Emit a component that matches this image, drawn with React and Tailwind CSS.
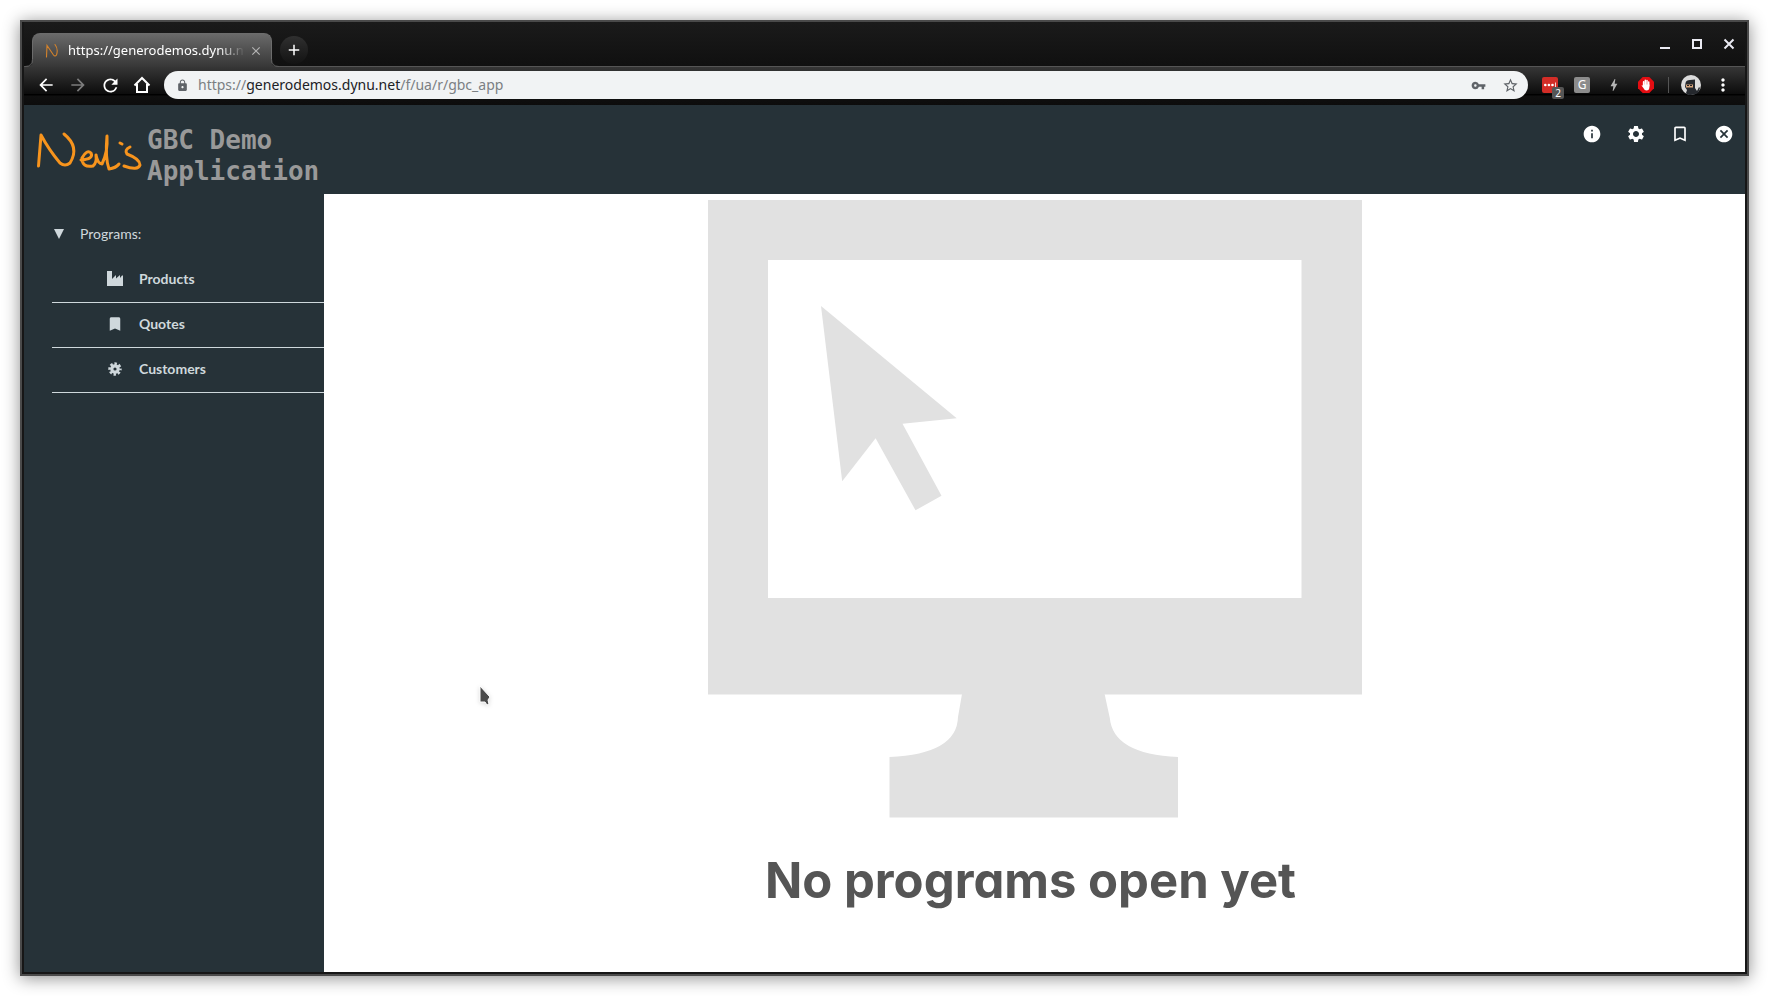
import { MdArrowBack, MdArrowForward, MdRefresh, MdLock, MdVpnKey, MdStarBorder, MdMoreVert, MdInfo, MdSettings, MdBookmarkBorder, MdCancel, MdBookmark, MdClose, MdAdd, MdBolt } from 'react-icons/md'

const focusRing = 'focus-visible:outline-1 focus-visible:outline-white'

function NavButton({ label, className = '', children }) {
  return (
    <button type="button" aria-label={label} className={`flex size-8 items-center justify-center ${focusRing} ${className}`}>
      {children}
    </button>
  )
}

function TabFlare({ className }) {
  return (
    <svg viewBox="0 0 8 8" className={`absolute bottom-0 size-2 ${className}`}>
      <path d="M8 0V8H0Q8 8 8 0" fill="#383838" />
      <path d="M0 7.500Q7.500 7.500 7.500 0" fill="none" stroke="#5c5c5c" />
    </svg>
  )
}

function TabStrip() {
  return (
    <div className="flex h-11 items-end bg-linear-to-b from-[#1b1b1b] to-[#101010] pl-2">
      <div className="relative z-10 -mb-px flex h-[34px] w-60 items-center rounded-t-lg border border-b-0 border-[#6c6c6c] bg-linear-to-b from-[#6a6a6a] to-[#373737] pr-2 pl-3">
        <TabFlare className="-left-2" />
        <TabFlare className="-right-2 -scale-x-100" />
        <svg viewBox="0 0 14 16" className="h-4 w-3.5 shrink-0" fill="none" stroke="#d5832b" strokeWidth="1.100" strokeLinecap="round">
          <path d="M1.500 14L2 2.500L8.500 12Q10 14 11.500 12Q13.500 6 10 1.500" />
        </svg>
        <span className="ml-[9px] min-w-0 flex-1 text-[13px] whitespace-nowrap text-white mask-r-from-85%">https://generodemos.dynu.n</span>
        <button type="button" aria-label="Close tab" className="ml-1 text-[#b4b4b4]"><MdClose size={14} /></button>
      </div>
      <button type="button" aria-label="New tab" className="mb-[2px] ml-2 flex size-7 items-center justify-center rounded-full bg-linear-to-b from-[#303030] to-[#131313] text-white">
        <MdAdd size={18} />
      </button>
      <div className="mb-1.5 ml-auto flex text-[#eaeaf2]">
        <NavButton label="Minimize"><svg viewBox="0 0 12 12" className="size-3"><path d="M1 9h10v2H1z" fill="currentColor" /></svg></NavButton>
        <NavButton label="Maximize"><svg viewBox="0 0 12 12" className="size-3"><path d="M2 2h8v8H2z" fill="none" stroke="currentColor" strokeWidth="2" /></svg></NavButton>
        <NavButton label="Close window"><svg viewBox="0 0 12 12" className="size-3"><path d="M1.500 1.500l9 9M10.500 1.500l-9 9" fill="none" stroke="currentColor" strokeWidth="2" /></svg></NavButton>
      </div>
    </div>
  )
}

function HomeIcon() {
  return (
    <svg viewBox="0 0 18 18" className="size-[18px]" fill="none" stroke="currentColor" strokeWidth="2">
      <path d="M1.500 9.500L9 2l7.500 7.500M4 8v8h10V8" />
    </svg>
  )
}

function Toolbar() {
  return (
    <div className="flex h-[39px] items-center border-t border-[#555] bg-[linear-gradient(#363636,#0c0c0c_27px,#000_27px,#000_28px,#101010_29px,#0c0c0c)] px-1.5 pb-[2px]">
      <NavButton label="Back" className="text-white"><MdArrowBack size={20} /></NavButton>
      <NavButton label="Forward" className="text-[#7c7c7c]"><MdArrowForward size={20} /></NavButton>
      <NavButton label="Reload" className="text-white"><MdRefresh size={21} /></NavButton>
      <NavButton label="Home" className="text-white"><HomeIcon /></NavButton>
      <div className="ml-1.5 flex h-7 min-w-0 flex-1 items-center rounded-full bg-[#f1f3f4] pr-[2px] pl-3 text-[#5f6368]">
        <MdLock size={13} className="shrink-0" />
        <div className="relative ml-[9px] h-5 min-w-0 flex-1 text-sm leading-5">
          <input aria-label="Address" defaultValue="https://generodemos.dynu.net/f/ua/r/gbc_app" className="absolute inset-0 w-full bg-transparent text-transparent caret-black outline-none" />
          <span aria-hidden="true" className="pointer-events-none text-[#7b7f83]">https://<span className="text-[#202124]">generodemos.dynu.net</span>/f/ua/r/gbc_app</span>
        </div>
        <button type="button" aria-label="Saved passwords" className="flex w-8 justify-center"><MdVpnKey size={15} /></button>
        <button type="button" aria-label="Bookmark this page" className="flex w-8 justify-center"><MdStarBorder size={17} /></button>
      </div>
      <div className="ml-1.5 flex items-center">
        <NavButton label="Password manager, 2">
          <span className="relative flex size-4 items-center justify-center rounded-xs bg-[#d32d27]">
            <svg viewBox="0 0 16 16" className="size-4" fill="#fff"><circle cx="3.300" cy="8" r="1.300" /><circle cx="6.900" cy="8" r="1.300" /><circle cx="10.500" cy="8" r="1.300" /><path d="M13 5.500h.8v4.500H13z" /></svg>
            <span className="absolute top-2.5 left-2.5 flex h-3 w-3 items-center justify-center rounded-xs bg-[#555] text-[10px] leading-3 text-white">2</span>
          </span>
        </NavButton>
        <NavButton label="G extension"><span className="flex size-4 items-center justify-center rounded-xs bg-[#8c8c8c] text-xs leading-4 text-white">G</span></NavButton>
        <NavButton label="Power extension" className="text-[#b5b5b5]"><MdBolt size={16} /></NavButton>
        <NavButton label="Ad blocker">
          <svg viewBox="0 0 16 16" className="size-4">
            <path d="M4.700 0h6.600L16 4.700v6.600L11.300 16H4.700L0 11.300V4.700z" fill="#e40d12" />
            <path d="M5.600 9V4.800M7.300 8V3.200M9 8V3.500M10.700 9V5" stroke="#fff" strokeWidth="1.500" strokeLinecap="round" />
            <path d="M4.900 7.500h6.500v2.500q0 3.500-3 3.500Q6.500 13.500 5 10.500L3.500 8.500q.8-.8 1.800.5z" fill="#fff" />
          </svg>
        </NavButton>
        <span className="mx-1.5 h-4 w-px bg-[#555]" />
        <NavButton label="Profile">
          <svg viewBox="0 0 20 20" className="size-5">
            <circle cx="10" cy="10" r="10" fill="#dcdcdc" />
            <path d="M4.500 8Q5 5 9 5l5-.5V13l2 3 2-4 1 1-2 5q-4 2-7 2-4 0-5-2l1-3-2-3z" fill="#25282d" />
            <path d="M5 9.500h7v3H5z" fill="#d7a57c" /><path d="M6 10.500h2m1 0h2" stroke="#222" />
          </svg>
        </NavButton>
        <NavButton label="Browser menu" className="text-white"><MdMoreVert size={20} /></NavButton>
      </div>
    </div>
  )
}

function AppHeader() {
  const actions = [['About', MdInfo], ['Settings', MdSettings], ['Bookmarks', MdBookmarkBorder], ['Close', MdCancel]]
  return (
    <header className="flex h-[89px] justify-between bg-[#263238]">
      <div className="flex pt-5 pl-3">
        <svg viewBox="0 0 108 44" className="mt-1 h-11 w-27" fill="none" stroke="#f7941d" strokeWidth="3" strokeLinecap="round" strokeLinejoin="round" role="img" aria-label="Neil's">
          <path d="M2.500 37L5 6Q13 21 24 34Q29 38 34 34Q44 18 28 5" />
          <path d="M45 31Q58 30 55 24Q51 20 46 29Q46 39 57 37Q61 34 60 26Q62 35 66 35Q72 23 71 7Q69 29 73 40Q80 39 83 35" />
          <path d="M84 14L86 15M94 18Q88 21 91 25Q104 30 104 36Q102 42 88 37" />
        </svg>
        <h1 className="ml-[3px] font-['DejaVu_Sans_Mono',monospace] text-[26px] leading-[31px] font-bold text-[#999]">GBC Demo<br />Application</h1>
      </div>
      <nav className="flex gap-3 pt-[13px] pr-[5px] text-white">
        {actions.map(([label, Icon]) => (
          <NavButton key={label} label={label}><Icon size={20} /></NavButton>
        ))}
      </nav>
    </header>
  )
}

function FactoryIcon() {
  return <svg viewBox="0 0 16 16" className="size-4" fill="currentColor"><path d="M0 0h5v8l4-4v3.500l4-3.500v3l2-2.500h1V15H0z" /></svg>
}

function FlowerIcon() {
  return (
    <svg viewBox="0 0 14 14" className="size-3.5" fill="none" stroke="currentColor">
      <circle cx="7" cy="7" r="3.200" strokeWidth="3.200" />
      <circle cx="7" cy="7" r="5.400" strokeWidth="2.600" strokeDasharray="2.400 1.841" strokeDashoffset="1.200" />
    </svg>
  )
}

function Sidebar() {
  const items = [['Products', FactoryIcon], ['Quotes', MdBookmark], ['Customers', FlowerIcon]]
  return (
    <aside className="w-75 shrink-0 bg-[#263238] pt-[18px] pl-7 font-[Lato] text-sm text-[#cfd8dc]">
      <button type="button" aria-expanded="true" className="flex h-11 items-center gap-4 pl-0.5">
        <svg viewBox="0 0 10 10" className="size-2.5" fill="currentColor"><path d="M0 0h10L5 10z" /></svg>
        Programs:
      </button>
      <ul className="pt-[2px]">
        {items.map(([label, Icon]) => (
          <li key={label} className="border-b border-[#cfd8dc]">
            <a href="#" className="flex h-11 items-center gap-3.5 pb-[2px] pl-[53px] font-bold">
              <span className="flex w-5 justify-center"><Icon size={18} /></span>{label}
            </a>
          </li>
        ))}
      </ul>
    </aside>
  )
}

function EmptyState() {
  return (
    <main className="relative flex min-w-0 flex-1 flex-col items-center bg-white pt-1.5">
      <svg viewBox="0 0 654 618" className="w-[654px] max-w-full" fill="#e1e1e1" role="img" aria-label="Empty desktop">
        <path fillRule="evenodd" d="M0 0h654v494.500H0zM60 60v338h533.500V60z" />
        <path d="M113 106L248.700 218.300L194.500 223.700L233.500 295.700L207.500 310.300L167.600 238.300L134.200 281.300z" />
        <path d="M254 494L250 517Q249 554 181.500 557V617.600H470V557Q405 554 401.800 518L396.600 494z" />
      </svg>
      <p className="mt-[29px] pr-2 font-[Inter] text-[49px] leading-[68px] font-bold text-[#555] [font-feature-settings:'cv11']">No programs open yet</p>
      <svg viewBox="0 0 14 22" className="absolute top-[490px] left-[154px] h-[22px] w-3.5 drop-shadow-sm">
        <path d="M2 2v16h5l2 3 2-1-1-4 2-3z" fill="#4b4b4b" stroke="#fff" />
      </svg>
    </main>
  )
}

export default function App() {
  return (
    <div className="flex min-h-screen flex-col bg-white p-5 font-['Noto_Sans']">
      <div className="flex flex-1 flex-col border-2 border-[#4a4a4a] bg-[#161616] px-[2px] pb-[2px] shadow-[0_2px_16px_rgba(0,0,0,0.45)]">
        <TabStrip />
        <Toolbar />
        <AppHeader />
        <div className="flex flex-1">
          <Sidebar />
          <EmptyState />
        </div>
      </div>
    </div>
  )
}
